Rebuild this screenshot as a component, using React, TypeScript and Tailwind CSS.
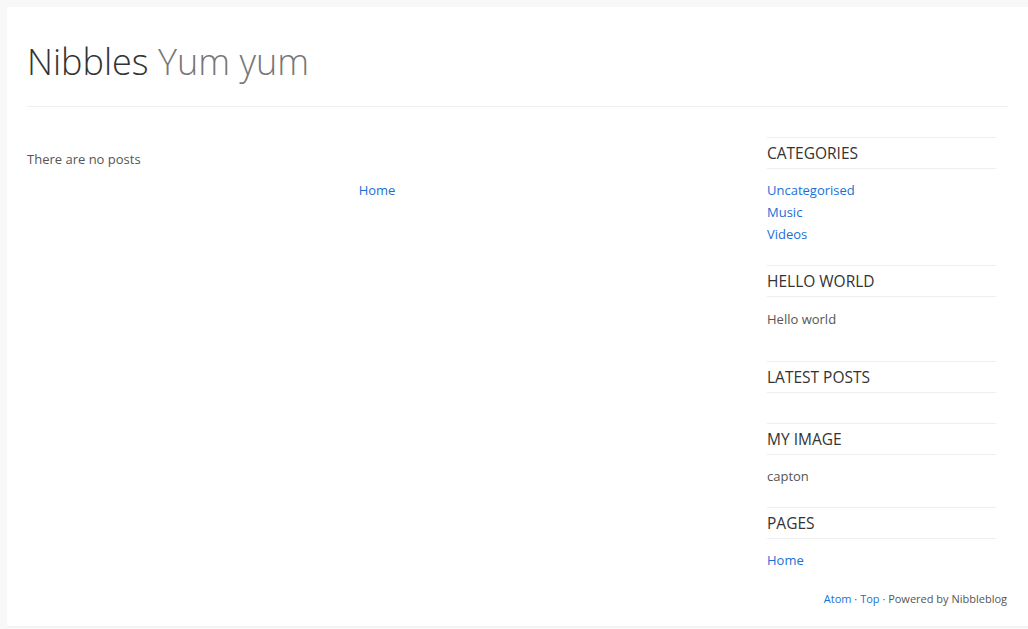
import React from 'react';

const sections = [
  { title: 'Categories', links: ['Uncategorised', 'Music', 'Videos'] },
  { title: 'Hello world', text: 'Hello world', gap: true },
  { title: 'Latest posts' },
  { title: 'My image', text: 'capton' },
  { title: 'Pages', links: ['Home'] },
];

function Widget({ title, links, text, gap }: { title: string; links?: string[]; text?: string; gap?: boolean }) {
  return (
    <div className="mb-5">
      <h3 className="border-y border-[#eeeeee] text-[15.5px] leading-[30px] uppercase text-[#333333]">{title}</h3>
      <div className={gap ? 'pt-[11px] pb-[11px]' : 'pt-[10px]'}>
        {links?.map((l) => (
          <div key={l} className="leading-[22px]">
            <a className="text-[#1a6fd6]">{l}</a>
          </div>
        ))}
        {text && <p className="leading-[22px]">{text}</p>}
      </div>
    </div>
  );
}

export default function App() {
  return (
    <div className="min-h-screen bg-[#f8f8f8] pl-[7px] pt-[7px] pb-[3px] text-[13px] text-[#555555]" style={{ fontFamily: '"Open Sans", sans-serif' }}>
      <div className="bg-white px-5 pb-[19px] shadow-[1px_1px_2px_rgba(0,0,0,0.04)]">
        <header className="pt-[34px] pb-[23px] border-b border-[#eeeeee]">
          <h1 className="text-[36px] leading-[42px] font-light text-[#333333]">
            Nibbles <span className="text-[#777777]">Yum yum</span>
          </h1>
        </header>
        <div className="flex">
          <main className="w-[700px] pt-[41px]">
            <p className="leading-[22px]">There are no posts</p>
            <div className="text-center mt-[9px] leading-[22px]">
              <a className="text-[#1a6fd6]">Home</a>
            </div>
          </main>
          <aside className="w-[229px] ml-10 pt-[30px]">
            {sections.map((s) => (
              <Widget key={s.title} {...s} />
            ))}
          </aside>
        </div>
        <footer className="text-right text-[11px] leading-4 pr-px">
          <a className="text-[#1a6fd6]">Atom</a> · <a className="text-[#1a6fd6]">Top</a> · Powered by Nibbleblog
        </footer>
      </div>
    </div>
  );
}
